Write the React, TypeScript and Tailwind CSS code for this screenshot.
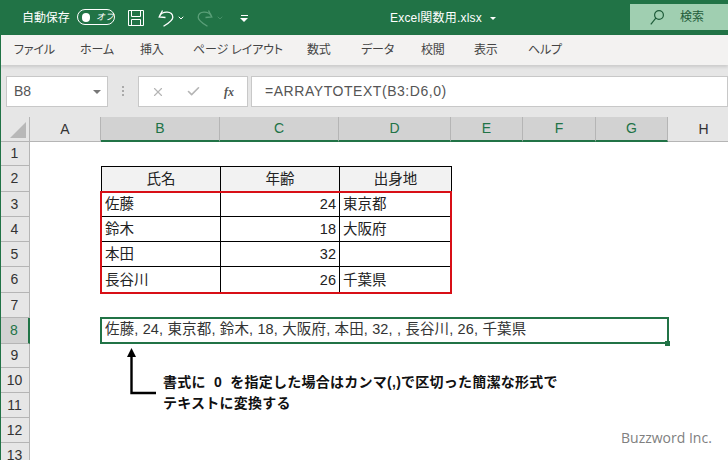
import { Check, ChevronDown, X } from "lucide-react"

const FONT = "font-['Liberation_Sans','Noto_Sans_CJK_JP',sans-serif]"

const tabs = [
  { label: "ファイル", w: "w-[38px]" },
  { label: "ホーム", w: "w-[32px]" },
  { label: "挿入", w: "w-[25px]" },
  { label: "ページ レイアウト", w: "w-[86px]" },
  { label: "数式", w: "w-[26px]" },
  { label: "データ", w: "w-[32px]" },
  { label: "校閲", w: "w-[25px]" },
  { label: "表示", w: "w-[26px]" },
  { label: "ヘルプ", w: "w-[32px]" },
]

const columns = [
  { name: "A", w: "w-[71px]", active: false },
  { name: "B", w: "w-[119px]", active: true },
  { name: "C", w: "w-[119px]", active: true },
  { name: "D", w: "w-[112px]", active: true },
  { name: "E", w: "w-[72px]", active: true },
  { name: "F", w: "w-[73px]", active: true },
  { name: "G", w: "w-[72px]", active: true },
  { name: "H", w: "w-[72px]", active: false },
]

const rowHeights = ["h-[24px]", "h-[26px]", "h-[25px]", "h-[25px]", "h-[25px]", "h-[26px]", "h-[25px]", "h-[26px]", "h-[24px]", "h-[25px]", "h-[25px]", "h-[25px]", "h-[25px]"]

const people = [
  { name: "佐藤", age: "24", from: "東京都", h: "h-[25px]" },
  { name: "鈴木", age: "18", from: "大阪府", h: "h-[25px]" },
  { name: "本田", age: "32", from: "", h: "h-[25px]" },
  { name: "長谷川", age: "26", from: "千葉県", h: "h-[26px]" },
]

function UndoIcon({ color, className }: { color: string; className: string }) {
  return (
    <svg className={className} width="16" height="18" viewBox="0 0 16 18" fill="none" stroke={color} strokeWidth="1.3">
      <path d="M4.5 1.5L1.2 8L7.5 8.5" />
      <path d="M1.8 6.5C4.5 2.2 14.5 1.5 14.8 8.2C15 11.5 10 14.5 5.5 17.3" />
    </svg>
  )
}

function TitleBar() {
  return (
    <div className="flex h-[35px] items-start bg-[#217346] text-white">
      <span className="ml-[22px] mt-[9px] w-[48px] text-[12px] leading-[18px] tracking-[-0.1px] whitespace-nowrap">自動保存</span>
      <div className="ml-[7px] mt-[9px] flex h-[16px] w-[38px] items-center rounded-full border border-white pl-[4px]">
        <span className="h-[9px] w-[9px] rounded-full bg-white" />
        <span className="ml-[6px] text-[9px] leading-none whitespace-nowrap italic">オフ</span>
      </div>
      <svg className="ml-[13px] mt-[10px]" width="16" height="16" viewBox="0 0 16 16" fill="none" stroke="white" strokeWidth="1">
        <path d="M0.5 0.5H15.5V15.5H0.5Z" />
        <path d="M3.5 0.5V6.5H12.5V0.5" />
        <path d="M3.5 15.5V9.5H12.5V15.5" />
      </svg>
      <UndoIcon className="ml-[14px] mt-[9px]" color="white" />
      <ChevronDown className="ml-[3px] mt-[14px]" size={8} strokeWidth={3} color="white" />
      <UndoIcon className="ml-[12px] mt-[9px] -scale-x-100" color="#5a9f78" />
      <ChevronDown className="ml-[3px] mt-[14px]" size={8} strokeWidth={2} color="#5a9f78" />
      <div className="ml-[15px] mt-[15px] flex w-[10px] flex-col items-center gap-[2px]">
        <span className="h-px w-[7px] bg-white" />
        <span className="h-0 w-0 border-x-[4px] border-t-[4px] border-x-transparent border-t-white" />
      </div>
      <span className="ml-[141px] mt-[9px] w-[93px] text-[12px] leading-[18px] tracking-[0.2px] whitespace-nowrap">Excel関数用.xlsx</span>
      <span className="ml-[7px] mt-[17px] h-0 w-0 border-x-[3px] border-t-[3px] border-x-transparent border-t-white" />
      <div className="ml-[134px] mt-[4px] flex h-[26px] w-[98px] items-center bg-[#a0cfb1] pl-[20px] text-[#1f5c3a]">
        <svg width="14" height="15" viewBox="0 0 14 15" fill="none" stroke="currentColor" strokeWidth="1.2">
          <circle cx="9" cy="5" r="4.4" />
          <path d="M5.8 8.2L0.8 14.4" />
        </svg>
        <span className="ml-[16px] text-[12px]">検索</span>
      </div>
    </div>
  )
}

function RibbonTabs() {
  return (
    <div className="relative z-10 flex h-[30px] items-center gap-[28px] bg-[#f3f2f1] pl-[14px] text-[12px] text-[#444] shadow-[0_2px_3px_rgba(0,0,0,0.12)]">
      {tabs.map((t) => (
        <span key={t.label} className={`${t.w} tracking-[-0.15px] whitespace-nowrap [font-feature-settings:'palt']`}>
          {t.label}
        </span>
      ))}
    </div>
  )
}

function FormulaBar() {
  return (
    <div className="flex h-[52px] items-start bg-[#e6e6e6] pl-[6px] pt-[11px]">
      <div className="flex h-[31px] w-[102px] items-center justify-between border border-[#c8c8c8] bg-white pl-[7px] pr-[6px] text-[14px] text-[#555]">
        <span>B8</span>
        <span className="h-0 w-0 border-x-[4px] border-t-[4px] border-x-transparent border-t-[#777]" />
      </div>
      <div className="ml-[14px] mt-[10px] flex w-[2px] flex-col gap-[2px]">
        <span className="h-[2px] w-[2px] bg-[#aaa]" />
        <span className="h-[2px] w-[2px] bg-[#aaa]" />
        <span className="h-[2px] w-[2px] bg-[#aaa]" />
      </div>
      <div className="ml-[14px] flex h-[31px] w-[110px] items-center border border-[#c8c8c8] bg-white pl-[12px]">
        <X size={14} strokeWidth={2} color="#b5b5b5" />
        <Check className="ml-[21px]" size={15} strokeWidth={2.6} color="#b5b5b5" />
        <span className="ml-[23px] font-['Liberation_Serif',serif] text-[12px] font-bold text-[#555] italic">fx</span>
      </div>
      <div className="ml-[3px] flex h-[31px] flex-1 items-center border border-[#c8c8c8] bg-white pl-[13px] text-[14px] tracking-[0.55px] text-[#555]">
        =ARRAYTOTEXT(B3:D6,0)
      </div>
    </div>
  )
}

function ColumnHeaders() {
  return (
    <div className="flex h-[25px] bg-[#e6e6e6]">
      <div className="relative w-[30px] shrink-0 border-r border-b border-[#b5b5b5]">
        <span className="absolute right-[3px] bottom-[3px] h-0 w-0 border-b-[16px] border-l-[16px] border-b-[#b8b8b8] border-l-transparent" />
      </div>
      {columns.map((c) => (
        <div
          key={c.name}
          className={
            c.active
              ? `${c.w} flex shrink-0 items-center justify-center border-r border-b-2 border-r-[#b5b5b5] border-b-[#217346] bg-[#d2d2d2] text-[14px] text-[#217346]`
              : `${c.w} flex shrink-0 items-center justify-center border-r border-b border-[#b5b5b5] text-[14px] text-[#333]`
          }
        >
          {c.name}
        </div>
      ))}
    </div>
  )
}

function RowHeaders() {
  return (
    <div className="w-[30px] shrink-0">
      {rowHeights.map((h, i) => (
        <div
          key={i}
          className={
            i === 7
              ? `${h} flex items-center justify-center border-r-2 border-b border-r-[#217346] border-b-[#b5b5b5] bg-[#d2d2d2] text-[14px] text-[#217346]`
              : `${h} flex items-center justify-center border-r border-b border-[#b5b5b5] bg-[#e6e6e6] text-[14px] text-[#333]`
          }
        >
          {i + 1}
        </div>
      ))}
    </div>
  )
}

function Sheet() {
  const cell = "flex items-center border-r border-b border-black px-[3px] pt-[2px] text-[14.5px] text-[#222]"
  return (
    <div className="relative flex-1 bg-white pt-[24px] pl-[71px]">
      <div className="grid w-[351px] grid-cols-[119px_119px_112px] border-t border-l border-black">
        <div className={`${cell} h-[25px] justify-center bg-[#f2f2f2]`}>氏名</div>
        <div className={`${cell} h-[25px] justify-center bg-[#f2f2f2]`}>年齢</div>
        <div className={`${cell} h-[25px] justify-center bg-[#f2f2f2]`}>出身地</div>
        {people.map((p) => (
          <div key={p.name} className="contents">
            <div className={`${cell} ${p.h}`}>{p.name}</div>
            <div className={`${cell} ${p.h} justify-end`}>{p.age}</div>
            <div className={`${cell} ${p.h}`}>{p.from}</div>
          </div>
        ))}
      </div>

      <div className="ml-[-1px] mt-[24px] flex h-[27px] w-[569px] items-center border-2 border-[#217346] pb-[2px] pl-[3px] text-[14.5px] tracking-[0.15px] text-[#333]">
        佐藤, 24, 東京都, 鈴木, 18, 大阪府, 本田, 32, , 長谷川, 26, 千葉県
      </div>

      <div className="ml-[62px] mt-[28px] w-[420px] text-[14px] leading-[21px] font-bold tracking-[0.25px] text-[#111]">
        <p className="whitespace-nowrap">書式に &nbsp;0&nbsp; を指定した場合はカンマ(,)で区切った簡潔な形式で</p>
        <p>テキストに変換する</p>
      </div>

      {/* red range around B3:D6 */}
      <div className="absolute top-[49px] left-[70px] h-[103px] w-[352px] border-2 border-[#d80f16]" />
      {/* fill handle */}
      <span className="absolute top-[199px] left-[635px] h-[5px] w-[5px] bg-[#217346]" />
      <svg className="absolute top-[205px] left-[95px]" width="40" height="50" viewBox="0 0 40 50">
        <path d="M6.5 1L11 10H2Z" fill="black" />
        <path d="M6.5 8V46H31" fill="none" stroke="black" strokeWidth="2.4" />
      </svg>
      <span className="absolute top-[285px] left-[591px] font-['Open_Sans',sans-serif] text-[14px] text-[#808080]">Buzzword Inc.</span>
    </div>
  )
}

export default function App() {
  return (
    <div className={`relative h-[460px] w-[728px] overflow-hidden bg-white ${FONT}`}>
      <TitleBar />
      <RibbonTabs />
      <FormulaBar />
      <ColumnHeaders />
      <div className="flex">
        <RowHeaders />
        <Sheet />
      </div>
      {/* window edge */}
      <span className="absolute top-[35px] bottom-0 left-0 z-20 w-px bg-[#217346]" />
    </div>
  )
}
